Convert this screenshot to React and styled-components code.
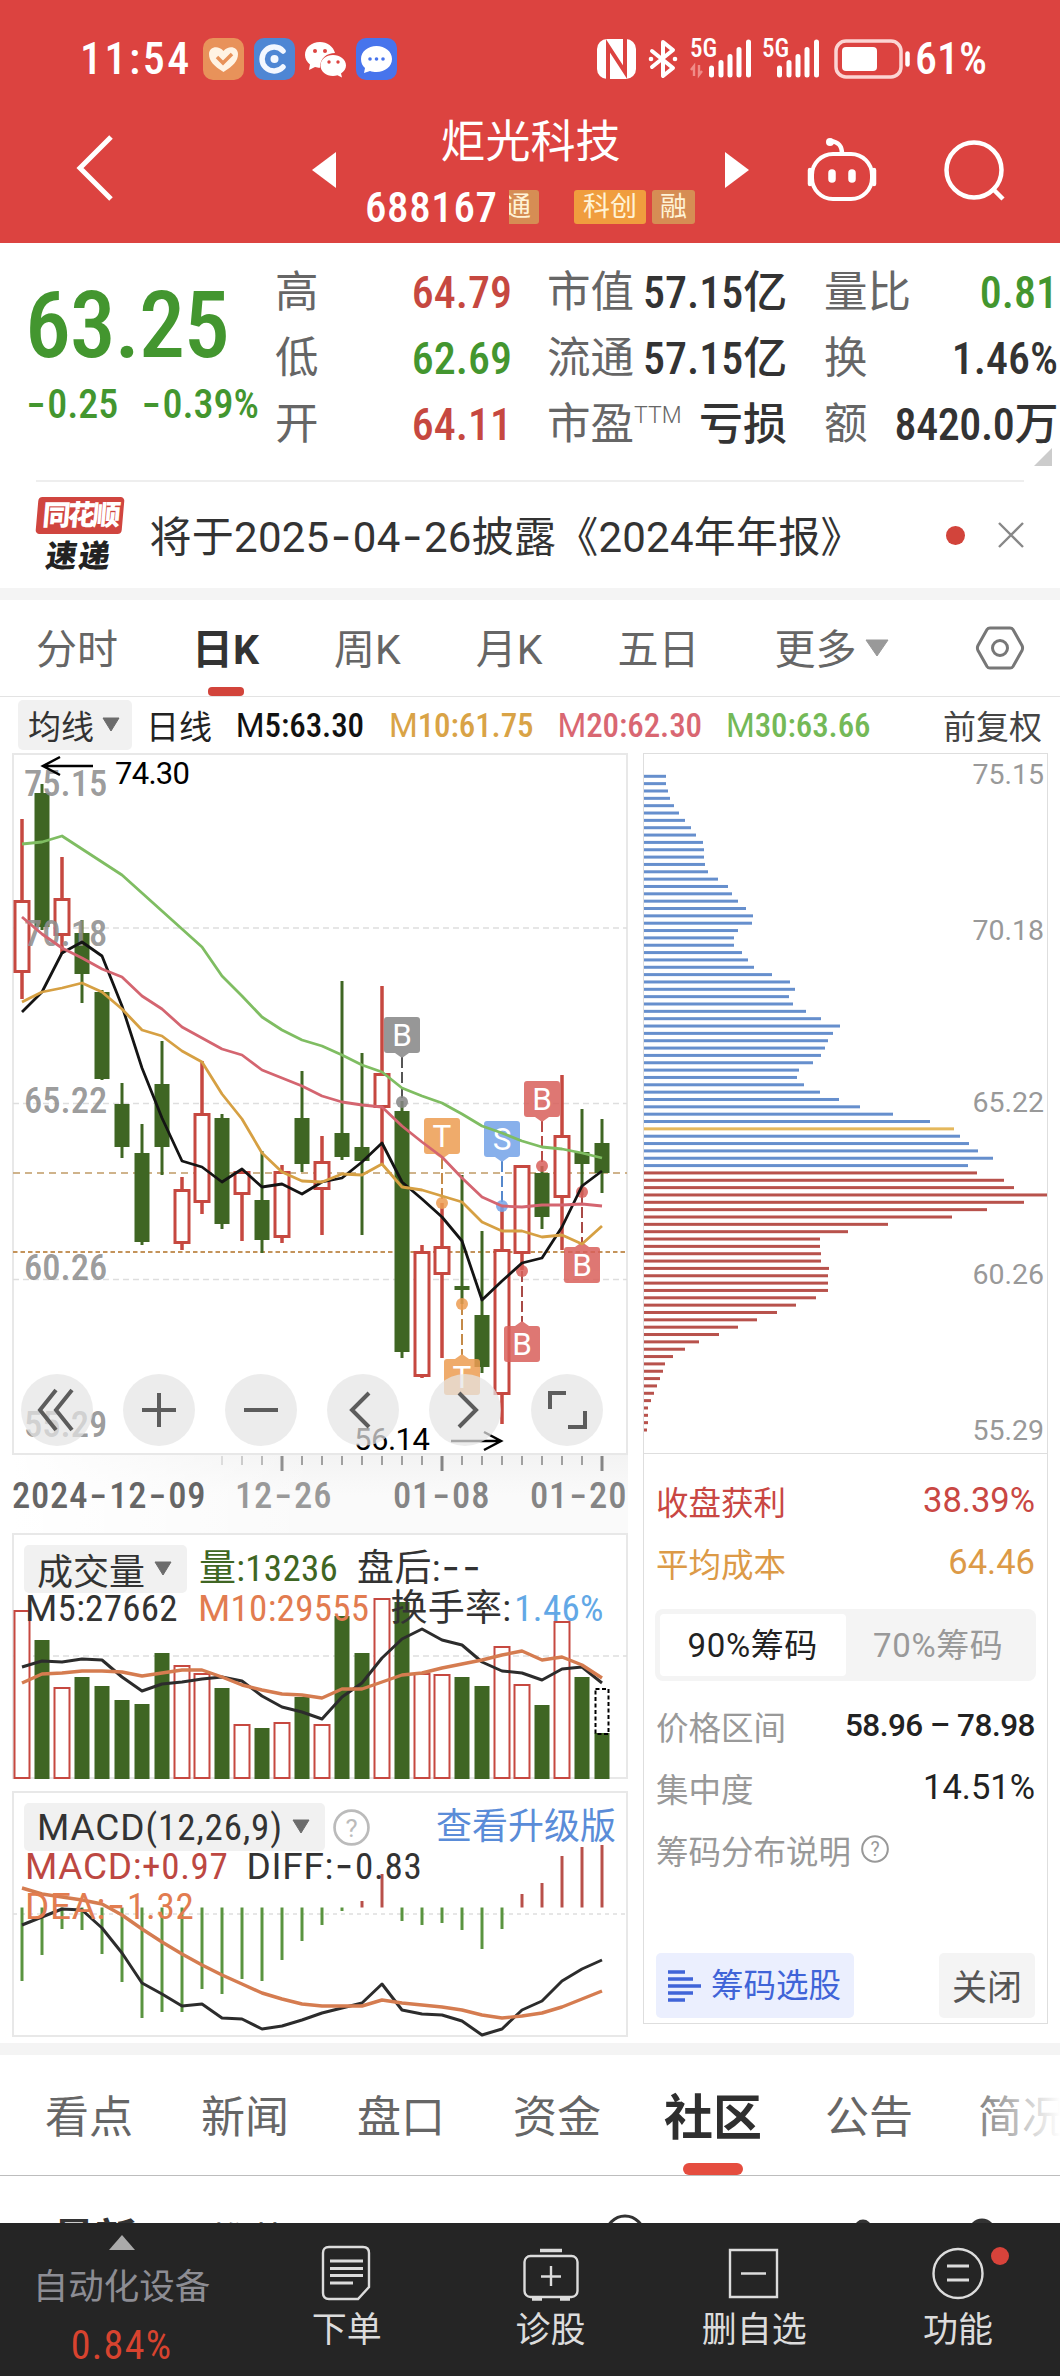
import React, { useState } from "react";
import styled, { createGlobalStyle } from "styled-components";

const RED = "#c64840";
const GREEN = "#3f6623";
const x = i => 22 + i * 20;

// [high, top, bottom, low, rising]
const candles = [
  [819, 900, 973, 999, 1], [784, 793, 927, 930, 0], [857, 898, 936, 954, 1], [920, 933, 974, 1003, 0],
  [990, 992, 1079, 1080, 0], [1083, 1104, 1147, 1158, 0], [1124, 1153, 1242, 1245, 0], [1041, 1084, 1147, 1175, 0],
  [1177, 1189, 1244, 1250, 1], [1061, 1113, 1203, 1214, 1], [1114, 1118, 1224, 1229, 0], [1169, 1171, 1195, 1241, 1],
  [1151, 1200, 1240, 1253, 0], [1165, 1171, 1238, 1243, 1], [1071, 1118, 1164, 1172, 0], [1136, 1161, 1190, 1235, 1],
  [981, 1133, 1157, 1160, 0], [1053, 1147, 1161, 1235, 0], [986, 1073, 1108, 1164, 1], [1101, 1111, 1352, 1358, 0],
  [1245, 1251, 1377, 1378, 1], [1203, 1246, 1275, 1358, 1], [1175, 1286, 1290, 1304, 0], [1231, 1315, 1367, 1373, 0],
  [1207, 1249, 1395, 1424, 1], [1165, 1165, 1254, 1270, 1], [1166, 1173, 1217, 1229, 0], [1075, 1135, 1198, 1250, 1],
  [1109, 1152, 1164, 1195, 0], [1119, 1143, 1173, 1193, 0],
];

const averages = [
  ["#7fbd62", [844, 842, 836, 849, 862, 875, 893, 911, 929, 947, 976, 996, 1017, 1030, 1040, 1046, 1055, 1065, 1072, 1088, 1096, 1103, 1114, 1126, 1133, 1141, 1147, 1149, 1153, 1158]],
  ["#141414", [1012, 992, 953, 942, 956, 1006, 1068, 1118, 1161, 1167, 1182, 1169, 1187, 1184, 1194, 1182, 1178, 1162, 1143, 1182, 1199, 1217, 1241, 1300, 1281, 1263, 1258, 1227, 1186, 1171]],
  ["#d6a043", [1002, 992, 988, 983, 992, 1009, 1030, 1036, 1051, 1062, 1094, 1119, 1153, 1172, 1181, 1182, 1174, 1175, 1164, 1187, 1190, 1196, 1202, 1222, 1231, 1231, 1237, 1235, 1244, 1226]],
  ["#d46570", [917, 934, 948, 958, 969, 977, 996, 1009, 1027, 1038, 1049, 1055, 1070, 1078, 1086, 1096, 1102, 1105, 1107, 1126, 1142, 1157, 1178, 1197, 1206, 1207, 1205, 1205, 1204, 1206]],
];

const volumes = [1610, 1640, 1687, 1677, 1686, 1700, 1704, 1653, 1665, 1673, 1688, 1724, 1728, 1722, 1697, 1724, 1616, 1653, 1598, 1602, 1673, 1674, 1677, 1686, 1646, 1684, 1705, 1621, 1677, 1733];
const volumeRising = [0, 2, 8, 9, 11, 13, 15, 18, 20, 21, 24, 25, 27];
const volumeM5 = [1667, 1661, 1662, 1659, 1660, 1677, 1691, 1684, 1682, 1679, 1677, 1681, 1696, 1707, 1712, 1719, 1697, 1683, 1658, 1639, 1629, 1640, 1645, 1662, 1671, 1673, 1680, 1669, 1667, 1683];
const volumeM10 = [1683, 1674, 1673, 1671, 1671, 1672, 1676, 1673, 1670, 1670, 1677, 1685, 1690, 1694, 1695, 1698, 1689, 1689, 1682, 1675, 1673, 1668, 1664, 1660, 1655, 1651, 1660, 1657, 1665, 1678];

const macd = [1981, 1955, 1929, 1930, 1954, 1982, 2018, 2012, 2012, 1989, 1994, 1979, 1981, 1960, 1941, 1925, 1911, 1901, 1874, 1921, 1925, 1923, 1930, 1949, 1929, 1894, 1883, 1856, 1847, 1845];
const diff = [1925, 1917, 1909, 1910, 1928, 1953, 1983, 1994, 2006, 2004, 2018, 2019, 2029, 2026, 2020, 2013, 2008, 2003, 1984, 2010, 2014, 2015, 2021, 2035, 2029, 2010, 2001, 1981, 1969, 1960];
const dea = [1888, 1894, 1897, 1900, 1904, 1915, 1929, 1942, 1954, 1965, 1975, 1984, 1993, 1999, 2004, 2006, 2006, 2006, 2000, 2003, 2005, 2007, 2010, 2015, 2018, 2016, 2013, 2007, 1999, 1991];

const chips = [22, 22, 24, 26, 30, 35, 41, 47, 52, 59, 60, 60, 61, 64, 74, 84, 88, 94, 102, 109, 108, 94, 90, 90, 98, 104, 110, 128, 146, 151, 145, 149, 162, 177, 196, 189, 184, 181, 177, 169, 155, 153, 160, 176, 195, 216, 249, 286, 310, 316, 325, 334, 349, 324, 333, 360, 370, 403, 380, 343, 308, 244, 204, 176, 176, 177, 177, 185, 184, 184, 184, 172, 152, 133, 113, 94, 75, 55, 41, 29, 21, 19, 16, 13, 10, 7, 4, 4, 4, 3];

// [letter, column, box top, dot y, fill, dash colour]
const trades = [
  ["B", 19, 1017, 1102, "#868686", "#555"],
  ["T", 21, 1118, 1203, "#ed9d52", "#c48a48"],
  ["S", 24, 1121, 1206, "#74a3e8", "#5588cc"],
  ["B", 26, 1081, 1166, "#d9605b", "#b84a46"],
  ["B", 28, 1247, 1192, "#d9605b", "#a84a46"],
  ["B", 25, 1326, 1271, "#d9605b", "#a84a46"],
  ["T", 22, 1359, 1304, "#ed9d52", "#c48a48"],
];

const quoteRows = [
  ["高", "64.79", "#c64840", "市值", "57.15亿", "量比", "0.81", "#43962f"],
  ["低", "62.69", "#43962f", "流通", "57.15亿", "换", "1.46%", "#333"],
  ["开", "64.11", "#c64840", "市盈", "亏损", "额", "8420.0万", "#333"],
];

const points = ys => ys.map((y, i) => `${x(i)},${y}`).join(" ");

// digits are set condensed, latin letters at full width, hyphens long
const Num = ({ children }) =>
  children.split(/([A-Z]+|-)/).map((part, i) => {
    if (part === "-") return <Dash key={i}>-</Dash>;
    return i % 2 ? <Wide key={i}>{part}</Wide> : part;
  });

const Line = ({ ys, color, width = 3 }) => (
  <polyline points={points(ys)} fill="none" stroke={color} strokeWidth={width} strokeLinejoin="round" />
);

const Grid = ({ y, color = "#dedede", dash = "6 4", width = 1.3 }) => (
  <line x1="13" x2="627" y1={y} y2={y} stroke={color} strokeWidth={width} strokeDasharray={dash} />
);

const Signal = ({ data }) => (
  <svg width={data ? 62 : 58} height="40" viewBox={data ? "0 0 62 40" : "4 0 58 40"}>
    <text x={data ? 0 : 4} y="17.500" fontSize="25" fontWeight="500" fill="#fff">5G</text>
    {data && <path d="M4 37V27l-3 4M9 26v10l3-4" stroke="#f08c88" strokeWidth="2.400" fill="none" />}
    <path d="M21.500 29v7M31 23.500v12.500M40 17.500v18.500M49 10.500v25.500M58.500 3v33" stroke="#fff" strokeWidth="5" strokeLinecap="round" />
  </svg>
);

function StatusBar() {
  return (
    <StatusRow>
      <Clock>11:54</Clock>
      <AppIcons>
        <svg width="41" height="42" viewBox="0 0 41 42">
          <rect width="41" height="42" rx="10" fill="#e8925a" />
          <path d="M20.500 34C11 28 6 23 6 16c0-7 9-9.500 14.500-3C26 6.500 35 9 35 16c0 7-5 12-14.500 18z" fill="#fff3e4" />
          <path d="M14 19l6 6 9-9" fill="none" stroke="#e8925a" strokeWidth="3.500" />
        </svg>
        <svg width="41" height="42" viewBox="0 0 41 42">
          <rect width="41" height="42" rx="10" fill="#4e86d4" />
          <path d="M29 13a12 12 0 1 0 0 16" fill="none" stroke="#f3f7ff" strokeWidth="5.500" strokeLinecap="round" />
          <circle cx="20.500" cy="21" r="4" fill="#f3f7ff" />
        </svg>
        <svg width="41" height="42" viewBox="0 0 41 42">
          <path d="M15 4C6.500 4 0 9.500 0 17c0 4 2 7 5 9.500L4 32l6-3c2 .5 3 .8 5 .8C15 20 22 15 30 15 28.500 8.500 22 4 15 4z" fill="#fff" />
          <path d="M28 17c-7 0-12.500 4.500-12.500 10.500S21 38 28 38c1.500 0 3-.2 4.500-.7L37 39.500l-1-4c3-2 5-5 5-8C41 21.500 35 17 28 17z" fill="#fff" />
          <g fill="#dc4340"><circle cx="10" cy="13" r="2" /><circle cx="20" cy="13" r="2" /><circle cx="24" cy="24" r="1.700" /><circle cx="33" cy="24" r="1.700" /></g>
        </svg>
        <svg width="41" height="42" viewBox="0 0 41 42">
          <rect width="41" height="42" rx="10" fill="#4774ec" />
          <path d="M20.500 8C12 8 5 13.500 5 21c0 4 1.500 7 4 9l-1 5 6-2c2 .7 4 1 6.500 1C29 34 36 28.500 36 21S29 8 20.500 8z" fill="#fff" />
          <g fill="#4774ec"><circle cx="14" cy="21" r="1.800" /><circle cx="20.500" cy="21" r="1.800" /><circle cx="27" cy="21" r="1.800" /></g>
        </svg>
      </AppIcons>
      <SystemIcons>
        <svg width="39" height="40" viewBox="0 0 39 40">
          <rect width="39" height="40" rx="10" fill="#fff" />
          <path d="M11 34V7l17 26V6" fill="none" stroke="#dc4340" strokeWidth="4" />
          <path d="M11 30v10M28 0v10" stroke="#dc4340" strokeWidth="4" />
        </svg>
        <svg width="30" height="40" viewBox="0 0 30 40">
          <path d="M4 12l21 17-10 8V3l10 8L4 28" fill="none" stroke="#fff" strokeWidth="4" strokeLinejoin="round" strokeLinecap="round" />
          <circle cx="3" cy="20" r="2.300" fill="#fff" /><circle cx="27" cy="20" r="2.300" fill="#fff" />
        </svg>
        <Signal data />
        <Signal />
        <svg width="77" height="40" viewBox="0 0 77 40">
          <rect x="2" y="2" width="65" height="36" rx="10" fill="none" stroke="#fbd5d3" strokeWidth="3.500" />
          <rect x="8" y="8" width="35" height="24" rx="4" fill="#fff" />
          <path d="M73.500 14.500v11" stroke="#fff" strokeWidth="4.500" strokeLinecap="round" />
        </svg>
      </SystemIcons>
      <Battery>61%</Battery>
    </StatusRow>
  );
}

function Header() {
  return (
    <HeaderWrapper>
      <StatusBar />
      <NavRow>
        <svg width="38" height="66" viewBox="0 0 38 66">
          <path d="M35 2L4 33l31 31" fill="none" stroke="#fff" strokeWidth="5" />
        </svg>
        <Arrow viewBox="0 0 24 36"><path d="M24 0v36L0 18z" fill="#fff" /></Arrow>
        <TitleBlock>
          <Title>炬光科技</Title>
          <CodeRow>
            <Code>688167</Code>
            <Tag $clip>通</Tag>
            <Tag $bright>科创</Tag>
            <Tag>融</Tag>
          </CodeRow>
        </TitleBlock>
        <Arrow viewBox="0 0 24 36"><path d="M0 0v36l24-18z" fill="#fff" /></Arrow>
        <Robot width="70" height="66" viewBox="0 0 70 66" fill="none" stroke="#fff" strokeWidth="4">
          <path d="M35 18C35 9 31 6 24 5" strokeWidth="4.500" />
          <circle cx="23" cy="6" r="4" fill="#fff" stroke="none" />
          <rect x="5" y="18" width="60" height="45" rx="21" />
          <path d="M3 34v14M67 34v14" strokeWidth="4.500" strokeLinecap="round" />
          <path d="M25 37v6M45 37v6" strokeWidth="7.500" strokeLinecap="round" />
        </Robot>
        <svg width="62" height="62" viewBox="0 0 62 62" fill="none" stroke="#fff" strokeWidth="4.500">
          <circle cx="30" cy="30" r="27.500" />
          <path d="M48 48l11 11" />
        </svg>
      </NavRow>
    </HeaderWrapper>
  );
}

function Quote() {
  return (
    <QuoteWrapper>
      <Price>
        <strong>63.25</strong>
        <Change><Num>-0.25</Num><i /><Num>-0.39%</Num></Change>
      </Price>
      <QuoteGrid>
        {quoteRows.map(([a, av, ac, b, bv, c, cv, cc], i) => (
          <React.Fragment key={a}>
            <Label>{a}</Label>
            <Value $color={ac}>{av}</Value>
            <Label $indent>{b}{i === 2 && <sup>TTM</sup>}</Label>
            <Value $pull>{bv}</Value>
            <Label $indent>{c}</Label>
            <Value $color={cc}>{cv}</Value>
          </React.Fragment>
        ))}
      </QuoteGrid>
      <Corner viewBox="0 0 18 18"><path d="M18 0v18H0z" fill="#ccc" /></Corner>
    </QuoteWrapper>
  );
}

function Notice() {
  return (
    <NoticeWrapper>
      <Brand>
        <BrandTop>同花顺</BrandTop>
        <BrandBottom>速递</BrandBottom>
      </Brand>
      <NoticeText>将于2025<Dash>-</Dash>04<Dash>-</Dash>26披露《2024年年报》</NoticeText>
      <Dot />
      <svg width="26" height="24" viewBox="0 0 26 24"><path d="M1 0l24 24M25 0L1 24" stroke="#888" strokeWidth="2.400" /></svg>
    </NoticeWrapper>
  );
}

function PriceChart() {
  return (
    <svg width="616" height="702" viewBox="12 753 616 702">
      <rect x="13" y="754" width="614" height="700" fill="#fff" stroke="#e8e8e8" strokeWidth="2" />
      <Grid y={928} />
      <Grid y={1103.500} />
      <Grid y={1279.500} />
      <Grid y={1173} color="#c09a66" dash="7 5" width={1.700} />
      <Grid y={1252} color="#c4935a" dash="4.500 3" width={1.900} />
      {candles.map(([high, top, bottom, low, up], i) => (
        <g key={i}>
          {up ? (
            <>
              <path d={`M${x(i)} ${high}V${top}M${x(i)} ${bottom}V${low}`} stroke={RED} strokeWidth="3.500" />
              <rect x={x(i) - 7} y={top + 1.5} width="14" height={bottom - top - 3} fill="#fff" stroke={RED} strokeWidth="3" />
            </>
          ) : (
            <>
              <path d={`M${x(i)} ${high}V${low}`} stroke={GREEN} strokeWidth="3" />
              <rect x={x(i) - 7.5} y={top} width="15" height={bottom - top} fill={GREEN} />
            </>
          )}
        </g>
      ))}
      {trades.map(([letter, col, top, dot, fill, dash]) => {
        const cx = x(col);
        const below = top > dot;
        return (
          <g key={col}>
            <path d={below ? `M${cx} ${dot}V${top - 4}` : `M${cx} ${top + 40}V${dot}`} stroke={dash} strokeWidth="2" strokeDasharray="11 4" />
            <g opacity="0.85">
              <circle cx={cx} cy={dot} r="6" fill={fill} />
              <rect x={cx - 18} y={top} width="36" height="36" rx="3" fill={fill} />
              <path d={below ? `M${cx - 7} ${top}l7-5 7 5z` : `M${cx - 7} ${top + 36}l7 5 7-5z`} fill={fill} />
            </g>
            <text x={cx} y={top + 29} fontSize="31.500" fill="#fff" textAnchor="middle">{letter}</text>
          </g>
        );
      })}
      {[["75.15", 796], ["70.18", 946], ["65.22", 1113], ["60.26", 1280], ["55.29", 1437]].map(([label, y]) => (
        <AxisLabel key={label} x="24" y={y}>{label}</AxisLabel>
      ))}
      {averages.map(([color, ys]) => <Line key={color} ys={ys} color={color} width={2.800} />)}
      <g stroke="#000" strokeWidth="2.500" fill="none">
        <path d="M93 766H43M60 757L43 766l17 9" />
        <path d="M451 1441h50M484 1432l17 9-17 9" />
      </g>
      <text x="115" y="784" fontSize="31" textLength="75">74.30</text>
      <text x="354" y="1450" fontSize="31" textLength="76">56.14</text>
    </svg>
  );
}

const toolPaths = [
  "M35 16L19 36l16 20M51 16L35 36l16 20",
  "M36 19v34M19 36h34",
  "M19 36h34",
  "M42 19L25 36l17 17",
  "M30 19l17 17-17 17",
  "M19 35V19h16M37 53h17V37",
];

function ChipsChart() {
  return (
    <svg width="403" height="699" viewBox="644 754 403 699">
      {chips.map((w, i) => (
        <rect key={i} x="644" y={774.800 + i * 7.345} width={w} height="3" fill={i === 48 ? "#e5b85c" : i < 54 ? "#668fcd" : "#b8524c"} />
      ))}
      {[["75.15", 784], ["70.18", 940], ["65.22", 1112], ["60.26", 1284], ["55.29", 1440]].map(([label, y]) => (
        <text key={label} x="1044" y={y} fontSize="28.500" fill="#999" textAnchor="end">{label}</text>
      ))}
    </svg>
  );
}

function VolumeChart() {
  return (
    <ChartLayer viewBox="12 1533 616 246">
      <rect x="13" y="1534" width="614" height="244" fill="#fff" stroke="#e8e8e8" strokeWidth="2" />
      <Grid y={1656} />
      {volumes.map((top, i) =>
        volumeRising.includes(i) ? (
          <rect key={i} x={x(i) - 7.5} y={top + 1} width="15" height={1777 - top} fill="#fff" stroke={RED} strokeWidth="2" />
        ) : (
          <rect key={i} x={x(i) - 7.5} y={top} width="15" height={1779 - top} fill={GREEN} />
        )
      )}
      <rect x="595.500" y="1689" width="13" height="45" fill="none" stroke="#000" strokeWidth="2" strokeDasharray="4 2.500" />
      <Line ys={volumeM5} color="#2c2c2c" />
      <Line ys={volumeM10} color="#d57c50" width={3.400} />
    </ChartLayer>
  );
}

function MacdChart() {
  return (
    <ChartLayer viewBox="12 1791 616 246">
      <rect x="13" y="1792" width="614" height="244" fill="#fff" stroke="#e8e8e8" strokeWidth="2" />
      <Grid y={1914} dash="4 4" />
      {macd.map((y, i) => (
        <path key={i} d={`M${x(i)} 1907.500V${y}`} stroke={y > 1907 ? "#5a9440" : "#b8504a"} strokeWidth="3" />
      ))}
      <Line ys={diff} color="#2c2c2c" />
      <Line ys={dea} color="#d57c50" width={3.400} />
    </ChartLayer>
  );
}

const Caret = () => (
  <svg width="18" height="14" viewBox="0 0 18 14"><path d="M1 0h16L9 13z" fill="#6c6c6c" stroke="#6c6c6c" strokeLinejoin="round" /></svg>
);

const Help = ({ size, color }) => (
  <svg width={size} height={size} viewBox="0 0 36 36">
    <circle cx="18" cy="18" r="16.500" fill="none" stroke={color} strokeWidth="2.600" />
    <text x="18" y="27" fontSize="25" fill={color} textAnchor="middle">?</text>
  </svg>
);

function ChipsInfo() {
  const [range, setRange] = useState("90%筹码");
  return (
    <Info>
      <InfoRow $color="#c94743"><span>收盘获利</span><b>38.39%</b></InfoRow>
      <InfoRow $color="#dc9a47"><span>平均成本</span><b>64.46</b></InfoRow>
      <Segment>
        {["90%筹码", "70%筹码"].map(name => (
          <button key={name} className={name === range ? "active" : ""} onClick={() => setRange(name)}>{name}</button>
        ))}
      </Segment>
      <InfoRow $value="#222" $strong><span>价格区间</span><b>58.96 – 78.98</b></InfoRow>
      <InfoRow $value="#222"><span>集中度</span><b>14.51%</b></InfoRow>
      <InfoRow><span>筹码分布说明</span><Help size={28} color="#999" /></InfoRow>
      <Actions>
        <PickButton>
          <svg width="33" height="32" viewBox="0 0 33 32"><path d="M0 2h17M0 9h25M0 16h33M0 23h25M0 30h17" stroke="#4064d8" strokeWidth="3.600" /></svg>
          筹码选股
        </PickButton>
        <CloseButton>关闭</CloseButton>
      </Actions>
    </Info>
  );
}

function BottomBar() {
  return (
    <BottomWrapper>
      <Sector>
        <svg width="26" height="15" viewBox="0 0 26 15"><path d="M13 0l13 15H0z" fill="#aaa" /></svg>
        <span>自动化设备</span>
        <b>0.84%</b>
      </Sector>
      <Action>
        <svg viewBox="0 0 56 56">
          <path d="M10 2h34q6 0 6 6v34L39 54H10q-6 0-6-6V8q0-6 6-6z" />
          <path d="M11 16h33M11 23.500h33M11 30.500h33M11 38h23" strokeWidth="3" />
        </svg>
        下单
      </Action>
      <Action>
        <svg viewBox="0 0 56 56">
          <rect x="1.500" y="11" width="53" height="41" rx="6" />
          <path d="M17 5.500h22M9 54h10M37 54h10" strokeWidth="3.600" />
          <path d="M28 21v20M18 31.500h20" />
        </svg>
        诊股
      </Action>
      <Action>
        <svg viewBox="0 0 56 56"><path d="M4 5h47v47H4zM15 28.500h25" /></svg>
        删自选
      </Action>
      <Action>
        <svg viewBox="0 0 56 56"><circle cx="28" cy="28.500" r="24.500" /><path d="M17 21h22M17 35h22" strokeWidth="3.200" /></svg>
        功能
        <Unread />
      </Action>
    </BottomWrapper>
  );
}

const periods = ["分时", "日K", "周K", "月K", "五日"];
const sections = ["看点", "新闻", "盘口", "资金", "社区", "公告", "简况"];

export default function App() {
  const [period, setPeriod] = useState("日K");
  const [section, setSection] = useState("社区");
  return (
    <Page>
      <GlobalStyle />
      <Header />
      <Quote />
      <Notice />
      <Band />
      <PeriodTabs>
        {periods.map(name => (
          <PeriodTab key={name} $active={name === period} onClick={() => setPeriod(name)}>{name}</PeriodTab>
        ))}
        <More>
          <span>更多</span>
          <svg width="24" height="18" viewBox="0 0 24 18"><path d="M1 1h22L12 17z" fill="#999" stroke="#999" strokeLinejoin="round" /></svg>
        </More>
        <Settings width="48" height="46" viewBox="0 0 48 46" fill="none" stroke="#777" strokeWidth="3">
          <path d="M14 3h20q2 0 3 1.500l9 16q1.200 2.500 0 5l-9 16q-1 1.500-3 1.500H14q-2 0-3-1.500l-9-16q-1.200-2.500 0-5l9-16Q12 3 14 3z" />
          <circle cx="24" cy="23" r="7.500" />
        </Settings>
      </PeriodTabs>
      <Legend>
        <Select>均线<Caret /></Select>
        <LegendItem $color="#222">日线</LegendItem>
        <LegendItem $color="#111" $m={24}><Num>M5:63.30</Num></LegendItem>
        <LegendItem $color="#d9a346" $m={25}><Num>M10:61.75</Num></LegendItem>
        <LegendItem $color="#d96772" $m={24}><Num>M20:62.30</Num></LegendItem>
        <LegendItem $color="#74b957" $m={24}><Num>M30:63.66</Num></LegendItem>
        <Restore>前复权</Restore>
      </Legend>
      <Charts>
        <Left>
          <PriceBox>
            <PriceChart />
            <Tools>
              {toolPaths.map(d => (
                <svg key={d} viewBox="0 0 72 72">
                  <circle cx="36" cy="36" r="36" fill="#e4e4e4" fillOpacity="0.72" />
                  <path d={d} fill="none" stroke="#5c5c5c" strokeWidth="4" />
                </svg>
              ))}
            </Tools>
          </PriceBox>
          <Dates>
            <svg width="616" height="20" viewBox="12 1454 616 20">
              {Array.from({ length: 20 }, (_, n) => {
                const i = n + 10;
                const major = [13, 21, 29].includes(i);
                return <path key={i} d={`M${x(i)} 1455v${major ? 15 : 9}`} stroke="#858585" strokeWidth={major ? 3 : 1.500} opacity={Math.min(1, 0.3 + n * 0.2)} />;
              })}
            </svg>
            <DateRow>
              <span><Num>2024-12-09</Num></span>
              <span><Num>12-26</Num></span>
              <span><Num>01-08</Num></span>
              <span><Num>01-20</Num></span>
            </DateRow>
          </Dates>
          <SubChart>
            <VolumeChart />
            <SubHead>
              <Select $large>成交量<Caret /></Select>
              <Stat $color={GREEN} $m={12}><Num>量:13236</Num></Stat>
              <Stat $m={19}><Num>盘后:--</Num></Stat>
            </SubHead>
            <StatRow>
              <Stat><Num>M5:27662</Num></Stat>
              <Stat $color="#e27c50" $m={20}><Num>M10:29555</Num></Stat>
              <Stat $m={21}>换手率:</Stat>
              <Stat $color="#62a8e6" $m={3}>1.46%</Stat>
            </StatRow>
          </SubChart>
          <SubChart $last>
            <MacdChart />
            <SubHead>
              <Select $large><em><Num>MACD(12,26,9)</Num></em><Caret /></Select>
              <HelpSlot><Help size={37} color="#bbb" /></HelpSlot>
              <Upgrade>查看升级版</Upgrade>
            </SubHead>
            <StatRow>
              <Stat $color="#bd4842" $loose><Num>MACD:+0.97</Num></Stat>
              <Stat $m={18} $loose><Num>DIFF:-0.83</Num></Stat>
            </StatRow>
            <StatRow>
              <Stat $color="#e27c50" $loose><Num>DEA:-1.32</Num></Stat>
            </StatRow>
          </SubChart>
        </Left>
        <Right>
          <ChipsChart />
          <ChipsInfo />
        </Right>
      </Charts>
      <Band />
      <SectionTabs>
        {sections.map(name => (
          <SectionTab key={name} $active={name === section} onClick={() => setSection(name)}>{name}</SectionTab>
        ))}
      </SectionTabs>
      <Feed>
        <strong>最新</strong>
        <span>推荐</span>
        <svg width="480" height="40" viewBox="0 0 480 40" fill="none" stroke="#333" strokeWidth="3">
          <circle cx="29" cy="20" r="19" />
          <circle cx="267" cy="13" r="7" fill="#333" />
          <circle cx="386" cy="17" r="12" fill="#333" />
        </svg>
      </Feed>
      <BottomBar />
    </Page>
  );
}

const GlobalStyle = createGlobalStyle`
  * {
    box-sizing: border-box;
  }
  body {
    margin: 0;
    background: #fff;
    font-family: Roboto, "Noto Sans CJK SC", sans-serif;
  }
  svg {
    display: block;
    flex: none;
    overflow: visible;
  }
  svg text {
    font-family: Roboto, "Noto Sans CJK SC", sans-serif;
  }
  button {
    border: none;
    padding: 0;
    background: none;
    font-family: inherit;
    font-size: inherit;
    color: inherit;
    cursor: pointer;
  }
`;

const Page = styled.div`
  width: 1060px;
  height: 2376px;
  overflow: hidden;
  display: flex;
  flex-direction: column;
  white-space: nowrap;
  color: #333;
`;

const Dash = styled.span`
  padding: 0 0.03em;
  font-family: Inter;
  font-stretch: 100%;
  font-size: 1.06em;
  line-height: 0;
`;

const Wide = styled.span`
  font-stretch: 100%;
  font-weight: 400;
`;

/* header */
const HeaderWrapper = styled.header`
  height: 243px;
  flex: none;
  background: #dc4340;
  color: #fff;
`;

const StatusRow = styled.div`
  height: 117px;
  padding-left: 80px;
  display: flex;
  align-items: center;
`;

const Clock = styled.div`
  width: 123px;
  font-size: 44px;
  font-weight: 500;
  font-stretch: 75%;
  letter-spacing: 2.5px;
`;

const AppIcons = styled.div`
  display: flex;
  gap: 10px;
`;

const SystemIcons = styled.div`
  margin-left: 200px;
  display: flex;
  align-items: center;
  gap: 12px;
  svg text {
    font-stretch: 75%;
  }
  svg:nth-child(4) {
    margin-left: -2px;
    margin-right: 2px;
  }
`;

const Battery = styled.div`
  margin-left: 4px;
  font-size: 44px;
  font-weight: 500;
  font-stretch: 75%;
`;

const NavRow = styled.div`
  height: 126px;
  padding-left: 76px;
  display: flex;
  align-items: flex-start;
  > svg:first-child {
    margin-top: 18px;
  }
  > svg:last-child {
    margin: 23px 0 0 67px;
  }
`;

const Arrow = styled.svg`
  width: 24px;
  height: 36px;
  margin-top: 35px;
  &:nth-child(2) {
    margin-left: 198px;
  }
`;

const TitleBlock = styled.div`
  width: 389px;
`;

const Title = styled.div`
  margin-top: 1px;
  text-align: center;
  font-size: 45px;
  line-height: 50px;
`;

const CodeRow = styled.div`
  margin-top: 21px;
  padding-left: 29px;
  display: flex;
  align-items: center;
  height: 36px;
`;

const Code = styled.div`
  width: 144px;
  font-size: 43px;
  font-weight: 500;
  font-stretch: 75%;
  letter-spacing: 0.6px;
`;

const Tag = styled.div`
  width: ${p => (p.$clip ? 30 : p.$bright ? 72 : 43)}px;
  margin-right: ${p => (p.$clip ? 35 : 6)}px;
  height: 34px;
  border-radius: ${p => (p.$clip ? "0 3px 3px 0" : "3px")};
  background: ${p => (p.$bright ? "#f09d3e" : "#d68d54")};
  color: #fff3d6;
  font-size: 27px;
  line-height: 35px;
  overflow: hidden;
  text-align: center;
  direction: ${p => (p.$clip ? "rtl" : "ltr")};
  padding-right: ${p => (p.$clip ? 8 : 0)}px;
`;

const Robot = styled.svg`
  margin: 19px 0 0 58px;
`;

/* quote */
const QuoteWrapper = styled.section`
  height: 237px;
  flex: none;
  display: flex;
  position: relative;
`;

const Price = styled.div`
  width: 275px;
  padding: 33px 0 0 25px;
  color: #43962f;
  font-stretch: 75%;
  strong {
    display: block;
    font-size: 92px;
    line-height: 100px;
    font-weight: 500;
    letter-spacing: -1.2px;
  }
`;

const Change = styled.div`
  margin-top: 4px;
  font-size: 40px;
  line-height: 50px;
  font-weight: 500;
  i {
    display: inline-block;
    width: 22px;
  }
`;

const QuoteGrid = styled.div`
  width: 785px;
  padding-top: 17px;
  display: grid;
  grid-template-columns: 98px 139px 131px 146px 100px 169px;
  grid-auto-rows: 66px;
  align-items: center;
`;

const Label = styled.div`
  padding-left: ${p => (p.$indent ? 35 : 0)}px;
  font-size: 43.5px;
  line-height: 66px;
  color: #666;
  sup {
    display: inline-block;
    width: 0;
    font-size: 23px;
    font-weight: 300;
    line-height: 0;
    vertical-align: 16px;
  }
`;

const Value = styled.div`
  font-size: 44px;
  line-height: 66px;
  font-stretch: 75%;
  font-weight: 500;
  text-align: right;
  padding-right: ${p => (p.$pull ? 2 : 0)}px;
  color: ${p => p.$color || "#333"};
  &:nth-child(18) {
    letter-spacing: -0.4px;
  }
`;

const Corner = styled.svg`
  position: absolute;
  right: 8px;
  bottom: 14px;
  width: 18px;
  height: 18px;
`;

/* notice */
const NoticeWrapper = styled.section`
  height: 108px;
  flex: none;
  margin: 0 36px;
  border-top: 2px solid #eee;
  display: flex;
  align-items: center;
`;

const Brand = styled.div`
  width: 115px;
  height: 76px;
  font-weight: 900;
`;

const BrandTop = styled.div`
  width: 86px;
  height: 37px;
  margin-left: 1px;
  border-radius: 4px;
  background: #d0453f;
  color: #fff;
  font-size: 28px;
  line-height: 38px;
  letter-spacing: -3px;
  text-align: center;
  transform: skewX(-5deg);
`;

const BrandBottom = styled.div`
  padding-left: 10px;
  font-size: 31px;
  line-height: 46px;
  letter-spacing: 2px;
  color: #222;
  transform: skewX(-8deg);
`;

const NoticeText = styled.div`
  width: 807px;
  padding-bottom: 4px;
  font-size: 42px;
  letter-spacing: 0.25px;
`;

const Dot = styled.div`
  width: 19px;
  height: 19px;
  margin-right: 33px;
  border-radius: 50%;
  background: #d2443b;
`;

const Band = styled.div`
  height: 12px;
  flex: none;
  background: #f4f4f4;
`;

/* period tabs */
const PeriodTabs = styled.nav`
  height: 97px;
  flex: none;
  padding-left: 36px;
  border-bottom: 1px solid #e3e3e3;
  display: flex;
  align-items: center;
  font-size: 41px;
  color: #666;
`;

const PeriodTab = styled.button`
  position: relative;
  height: 96px;
  padding-bottom: 4px;
  margin-right: ${p => (p.$active ? 75 : 75)}px;
  font-weight: ${p => (p.$active ? 700 : 400)};
  color: ${p => (p.$active ? "#333" : "#666")};
  &:first-child {
    margin-right: 74px;
  }
  &::after {
    content: "";
    display: ${p => (p.$active ? "block" : "none")};
    position: absolute;
    bottom: 0;
    left: calc(50% - 18px);
    width: 36px;
    height: 9px;
    border-radius: 4px;
    background: #d2443b;
  }
`;

const More = styled.div`
  display: flex;
  align-items: center;
  gap: 8px;
  span {
    padding-bottom: 4px;
  }
`;

const Settings = styled.svg`
  margin: 0 36px 0 auto;
`;

/* moving average legend */
const Legend = styled.div`
  height: 56px;
  flex: none;
  padding: 2px 18px;
  display: flex;
  align-items: center;
`;

const Select = styled.button`
  height: ${p => (p.$large ? 48 : 50)}px;
  padding: 0 ${p => (p.$large ? 15 : 12)}px 0 ${p => (p.$large ? 13 : 10)}px;
  margin-right: ${p => (p.$large ? 0 : 14)}px;
  border-radius: 5px;
  background: #f1f1f1;
  display: flex;
  align-items: center;
  gap: ${p => (p.$large ? 9 : 8)}px;
  font-size: ${p => (p.$large ? 36 : 33)}px;
  color: #333;
  em {
    font-style: normal;
    font-stretch: 75%;
    font-size: 37px;
    letter-spacing: 0.9px;
  }
`;

const LegendItem = styled.div`
  margin-left: ${p => p.$m || 0}px;
  font-size: 33px;
  font-weight: ${p => (p.$m ? 500 : 400)};
  font-stretch: 75%;
  letter-spacing: -0.1px;
  color: ${p => p.$color};
`;

const Restore = styled.div`
  margin-left: auto;
  font-size: 33px;
  color: #444;
`;

/* charts */
const Charts = styled.main`
  height: 1290px;
  flex: none;
  padding-left: 12px;
  display: flex;
  align-items: flex-start;
  gap: 15px;
`;

const Left = styled.div`
  width: 616px;
`;

const PriceBox = styled.div`
  position: relative;
`;

const AxisLabel = styled.text`
  font-size: 36.5px;
  font-weight: 500;
  font-stretch: 75%;
  fill: #8f8f8f;
  fill-opacity: 0.9;
`;

const Tools = styled.div`
  position: absolute;
  left: 9px;
  bottom: 9px;
  display: flex;
  gap: 30px;
  svg {
    width: 72px;
    height: 72px;
  }
`;

const Dates = styled.div`
  height: 78px;
  background: linear-gradient(90deg, #fff, rgba(255, 255, 255, 0) 50%), linear-gradient(#f3f3f3, #fafafa 40px);
`;

const DateRow = styled.div`
  display: flex;
  margin-top: -1px;
  font-size: 36.5px;
  line-height: 44px;
  font-weight: 500;
  font-stretch: 75%;
  letter-spacing: 0.8px;
  color: #858585;
  > span:nth-child(1) {
    width: 223px;
    color: #666;
  }
  > span:nth-child(2) {
    width: 158px;
    color: #999;
  }
  > span:nth-child(3) {
    width: 137px;
  }
`;

const SubChart = styled.div`
  position: relative;
  height: 246px;
  margin-top: ${p => (p.$last ? 12 : 0)}px;
`;

const ChartLayer = styled.svg`
  position: absolute;
  inset: 0;
  width: 616px;
  height: 246px;
`;

const SubHead = styled.div`
  position: relative;
  margin-bottom: -4px;
  padding: 12px 12px 0 12px;
  display: flex;
  align-items: center;
`;

const StatRow = styled.div`
  position: relative;
  padding-left: 13px;
  display: flex;
`;

const Stat = styled.div`
  margin-left: ${p => p.$m || 0}px;
  font-size: 37px;
  line-height: 40px;
  font-stretch: 75%;
  letter-spacing: ${p => (p.$loose ? 0.7 : 0.3)}px;
  color: ${p => p.$color || "#333"};
`;

const HelpSlot = styled.div`
  margin-left: 8px;
`;

const Upgrade = styled.a`
  margin-left: auto;
  font-size: 36px;
  line-height: 40px;
  color: #5a8cd8;
`;

/* chips panel */
const Right = styled.aside`
  width: 405px;
  height: 1271px;
  border: 1px solid #dedede;
`;

const Info = styled.div`
  border-top: 1px solid #dedede;
  padding: 17px 12px 0;
`;

const InfoRow = styled.div`
  height: 62px;
  padding-bottom: 4px;
  display: flex;
  align-items: center;
  justify-content: flex-start;
  gap: 10px;
  font-size: 32.5px;
  color: ${p => p.$color || "#999"};
  b {
    margin-left: auto;
    font-size: ${p => (p.$strong ? 31.5 : 34.5)}px;
    font-weight: ${p => (p.$strong ? 500 : 400)};
    letter-spacing: ${p => (p.$strong ? -0.5 : 0)}px;
    color: ${p => p.$value || "inherit"};
  }
`;

const Segment = styled.div`
  height: 72px;
  margin: 14px -1px 15px;
  padding: 5px;
  border-radius: 8px;
  background: #f4f4f4;
  display: flex;
  font-size: 33px;
  letter-spacing: 0.6px;
  color: #999;
  button {
    flex: 1;
    padding-bottom: 4px;
    border-radius: 4px;
    letter-spacing: inherit;
  }
  .active {
    background: #fff;
    color: #222;
  }
`;

const Actions = styled.div`
  margin-top: 71px;
  display: flex;
  justify-content: space-between;
  button {
    height: 65px;
    border-radius: 5px;
  }
`;

const PickButton = styled.button`
  width: 198px;
  padding-left: 12px;
  display: flex;
  align-items: center;
  gap: 10px;
  background: #ebeffe;
  color: #4064d8;
  font-size: 32.5px;
  line-height: 60px;
`;

const CloseButton = styled.button`
  width: 96px;
  padding-bottom: 3px;
  background: #f4f4f4;
  color: #555;
  font-size: 35px;
`;

/* section tabs */
const SectionTabs = styled.nav`
  height: 121px;
  flex: none;
  padding-left: 45px;
  border-bottom: 1px solid #bdbdbd;
  display: flex;
  overflow: hidden;
  position: relative;
  &::after {
    content: "";
    position: absolute;
    right: 0;
    top: 0;
    width: 100px;
    height: 100%;
    background: linear-gradient(90deg, rgba(255, 255, 255, 0), #fff);
  }
`;

const SectionTab = styled.button`
  position: relative;
  flex: none;
  height: 120px;
  padding-bottom: 3px;
  margin-right: ${p => (p.$active ? 63 : 68)}px;
  font-size: ${p => (p.$active ? 49 : 44)}px;
  font-weight: ${p => (p.$active ? 700 : 400)};
  color: ${p => (p.$active ? "#2f2f2f" : "#666")};
  &:nth-child(4) {
    margin-right: 63px;
  }
  &:nth-child(6) {
    margin-right: 65px;
  }
  &::after {
    content: "";
    display: ${p => (p.$active ? "block" : "none")};
    position: absolute;
    bottom: 0;
    left: calc(50% - 30px);
    width: 60px;
    height: 12px;
    border-radius: 6px;
    background: #e54d3f;
  }
`;

const Feed = styled.div`
  height: 47px;
  flex: none;
  overflow: hidden;
  padding: 39px 0 0 53px;
  display: flex;
  font-size: 42px;
  line-height: 50px;
  span {
    width: 76px;
    margin-left: 74px;
    margin-right: 309px;
    padding-top: 1px;
    font-size: 38px;
    color: #666;
  }
  strong {
    width: 88px;
  }
`;

/* bottom bar */
const BottomWrapper = styled.footer`
  height: 153px;
  flex: none;
  position: relative;
  background: #252525;
  display: flex;
`;

const Sector = styled.div`
  width: 243px;
  margin-right: 2px;
  padding-top: 12px;
  display: flex;
  flex-direction: column;
  align-items: center;
  span {
    margin-top: 12px;
    font-size: 35.5px;
    line-height: 50px;
    color: #8d8d94;
  }
  b {
    margin-top: 9px;
    font-size: 40px;
    line-height: 50px;
    font-weight: 400;
    font-stretch: 75%;
    letter-spacing: 1.3px;
    color: #d8432f;
  }
`;

const Action = styled.div`
  position: relative;
  flex: 1;
  padding-top: 22px;
  display: flex;
  flex-direction: column;
  align-items: center;
  font-size: 35px;
  line-height: 60px;
  color: #dcdcdc;
  svg {
    width: 56px;
    height: 56px;
    fill: none;
    stroke: #dcdcdc;
    stroke-width: 2.4;
  }
`;

const Unread = styled.div`
  position: absolute;
  top: 24px;
  right: 51px;
  width: 18px;
  height: 18px;
  border-radius: 50%;
  background: #d8433b;
`;
